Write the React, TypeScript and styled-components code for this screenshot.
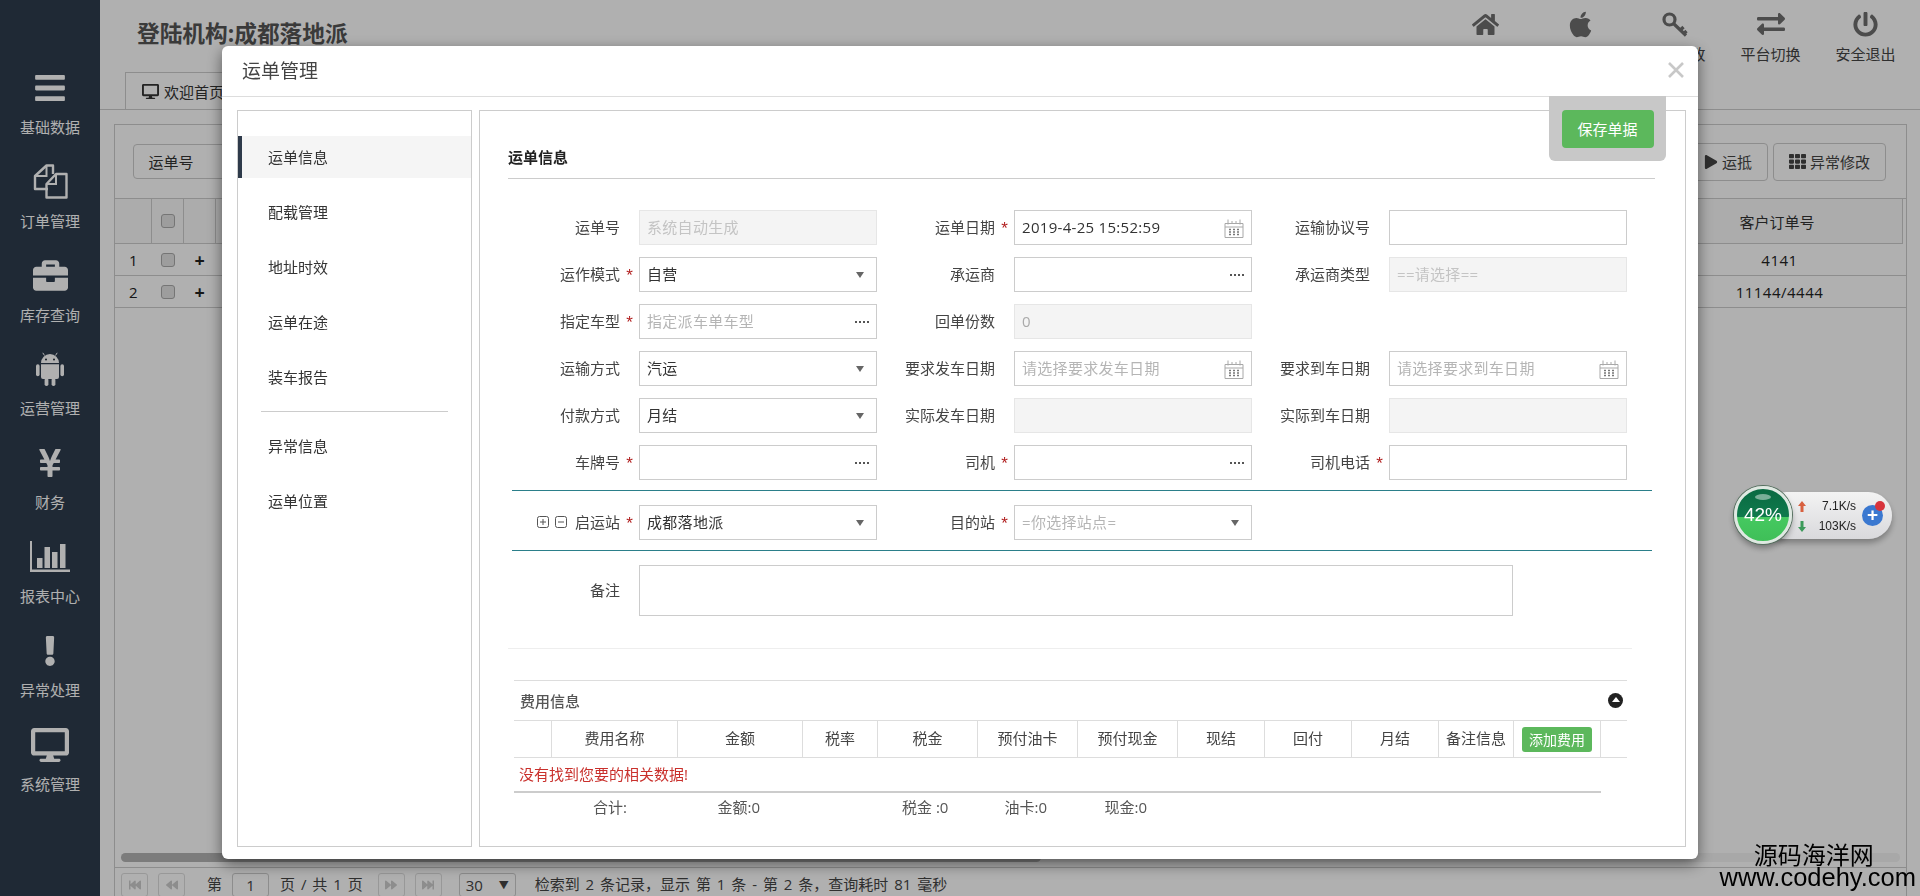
import styled, { createGlobalStyle } from 'styled-components';
import {
  FaApple,
  FaBackward,
  FaBars,
  FaBriefcase,
  FaDesktop,
  FaExchangeAlt,
  FaExclamation,
  FaFastBackward,
  FaFastForward,
  FaForward,
  FaHome,
  FaPlay,
  FaPowerOff,
  FaTh,
  FaYenSign,
} from 'react-icons/fa';

const FONT = '"Open Sans", "Noto Sans CJK SC", sans-serif';
const FEE_COLUMNS = '38px 126px 125px 75px 100px 100px 100px 87px 87px 87px 75px 87px 26px';

type Addon = 'date' | 'select' | 'more';

interface IField {
  label: string;
  required?: boolean;
  value?: string;
  placeholder?: string;
  disabled?: boolean;
  addon?: Addon;
}

const FORM_ROWS: (IField | null)[][] = [
  [
    { label: '运单号', placeholder: '系统自动生成', disabled: true },
    { label: '运单日期', required: true, value: '2019-4-25 15:52:59', addon: 'date' },
    { label: '运输协议号' },
  ],
  [
    { label: '运作模式', required: true, value: '自营', addon: 'select' },
    { label: '承运商', addon: 'more' },
    { label: '承运商类型', placeholder: '==请选择==', disabled: true },
  ],
  [
    { label: '指定车型', required: true, placeholder: '指定派车单车型', addon: 'more' },
    { label: '回单份数', value: '0', disabled: true },
    null,
  ],
  [
    { label: '运输方式', value: '汽运', addon: 'select' },
    { label: '要求发车日期', placeholder: '请选择要求发车日期', addon: 'date' },
    { label: '要求到车日期', placeholder: '请选择要求到车日期', addon: 'date' },
  ],
  [
    { label: '付款方式', value: '月结', addon: 'select' },
    { label: '实际发车日期', disabled: true },
    { label: '实际到车日期', disabled: true },
  ],
  [
    { label: '车牌号', required: true, addon: 'more' },
    { label: '司机', required: true, addon: 'more' },
    { label: '司机电话', required: true },
  ],
];

function FilesIcon() {
  return (
    <svg width="36" height="35" viewBox="0 0 36 35" fill="none" stroke="currentColor" strokeWidth="2.4">
      <path d="M21 10V1.5h-6.5L3 12v13h13" strokeLinejoin="round" />
      <path d="M14.5 1.5V12H3" strokeWidth="2" />
      <path d="M34.5 33.5h-20V20L24 10h10.5z" strokeLinejoin="round" />
      <path d="M24 10v10H14.5" strokeWidth="2" />
    </svg>
  );
}

function AndroidIcon() {
  return (
    <svg width="28" height="34" viewBox="0 0 28 34" fill="currentColor">
      <path d="M5 11a9 9 0 0 1 18 0z" />
      <path d="M8.5 3.5L6.8 0.8M19.5 3.5l1.7-2.7" stroke="currentColor" strokeWidth="1" />
      <circle cx="10" cy="7.5" r="1" fill="#1f2a36" />
      <circle cx="18" cy="7.5" r="1" fill="#1f2a36" />
      <path d="M5 12.2h18V25a2 2 0 0 1-2 2H7a2 2 0 0 1-2-2z" />
      <rect x="0" y="12.2" width="3.6" height="12" rx="1.8" />
      <rect x="24.4" y="12.2" width="3.6" height="12" rx="1.8" />
      <rect x="8.6" y="26" width="3.8" height="8" rx="1.8" />
      <rect x="15.6" y="26" width="3.8" height="8" rx="1.8" />
    </svg>
  );
}

function ChartIcon() {
  return (
    <svg width="40" height="31" viewBox="0 0 40 31" fill="currentColor">
      <path d="M0 0h2v28.5h38V31H0z" />
      <rect x="7" y="17" width="5.5" height="10" />
      <rect x="14.5" y="6" width="5.5" height="21" />
      <rect x="22" y="11" width="5.5" height="16" />
      <rect x="30" y="3" width="5.5" height="24" />
    </svg>
  );
}

function KeyIcon() {
  return (
    <svg width="27" height="25" viewBox="0 0 27 25" fill="none" stroke="currentColor" strokeWidth="3.2">
      <ellipse cx="7.5" cy="7.5" rx="5.5" ry="5.5" />
      <path d="M11.5 11.5L24 23.5M18.5 18l3-3M22 21.5l2.5-2.5" />
    </svg>
  );
}

const SIDE_ITEMS = [
  { label: '基础数据', icon: <FaBars size={34} /> },
  { label: '订单管理', icon: <FilesIcon /> },
  { label: '库存查询', icon: <FaBriefcase size={35} /> },
  { label: '运营管理', icon: <AndroidIcon /> },
  { label: '财务', icon: <FaYenSign size={32} /> },
  { label: '报表中心', icon: <ChartIcon /> },
  { label: '异常处理', icon: <FaExclamation size={30} /> },
  { label: '系统管理', icon: <FaDesktop size={38} /> },
];

const TOP_ITEMS = [
  { label: '首页', icon: <FaHome size={27} /> },
  { label: '苹果', icon: <FaApple size={29} /> },
  { label: '密码修改', icon: <KeyIcon /> },
  { label: '平台切换', icon: <FaExchangeAlt size={28} /> },
  { label: '安全退出', icon: <FaPowerOff size={25} /> },
];

const NAV_TOP = ['运单信息', '配载管理', '地址时效', '运单在途', '装车报告'];
const NAV_BOTTOM = ['异常信息', '运单位置'];
const FEE_HEADS = [
  '',
  '费用名称',
  '金额',
  '税率',
  '税金',
  '预付油卡',
  '预付现金',
  '现结',
  '回付',
  '月结',
  '备注信息',
];

function CalendarIcon() {
  return (
    <svg width="20" height="20" viewBox="0 0 20 20" fill="none" stroke="#a8a8a8">
      <path d="M1 5.5h18v14H1zM1 9h18" />
      <path d="M4 1.5v5M8 3v3M12 3v3M16 1.5v5" />
      <path
        d="M5 11.5h2M9 11.5h2M13 11.5h2M5 14h2M9 14h2M13 14h2M5 16.5h2M9 16.5h2M13 16.5h2"
        stroke="#777"
        strokeWidth="1.5"
      />
    </svg>
  );
}

function MoreIcon() {
  return (
    <svg width="14" height="2" viewBox="0 0 14 2" fill="#555">
      <rect x="0" width="2" height="2" />
      <rect x="4" width="2" height="2" />
      <rect x="8" width="2" height="2" />
      <rect x="12" width="2" height="2" />
    </svg>
  );
}

function TreeIcon({ plus }: { plus?: boolean }) {
  return (
    <svg width="12" height="12" viewBox="0 0 12 12" fill="none" stroke="#555">
      <rect x="0.5" y="0.5" width="11" height="11" rx="2" />
      <path d={plus ? 'M3 6h6M6 3v6' : 'M3 6h6'} />
    </svg>
  );
}

function FormField({ label, required, value, placeholder, disabled, addon }: IField) {
  return (
    <Field>
      <FieldLabel>{label}</FieldLabel>
      <Star>{required ? '*' : ''}</Star>
      <InputBox $disabled={disabled}>
        <TextInput readOnly disabled={disabled} value={value ?? ''} placeholder={placeholder} />
        {addon === 'date' && <CalendarIcon />}
        {addon === 'more' && <MoreIcon />}
        {addon === 'select' && <Caret />}
      </InputBox>
    </Field>
  );
}

export default function App() {
  return (
    <>
      <GlobalStyle />
      <Shell>
        <Sidebar>
          {SIDE_ITEMS.map(({ label, icon }) => (
            <SideItem key={label}>
              <SideIcon>{icon}</SideIcon>
              <SideLabel>{label}</SideLabel>
            </SideItem>
          ))}
        </Sidebar>
        <Main>
          <Header>
            <HeaderTop>
              <OrgTitle>登陆机构:成都落地派</OrgTitle>
              <TopNav>
                {TOP_ITEMS.map(({ label, icon }) => (
                  <TopItem key={label}>
                    <TopIcon>{icon}</TopIcon>
                    <span>{label}</span>
                  </TopItem>
                ))}
              </TopNav>
            </HeaderTop>
            <TabRow>
              <Tab>
                <FaDesktop size={17} />
                欢迎首页
              </Tab>
            </TabRow>
          </Header>
          <ListPanel>
            <Toolbar>
              <SearchLabel>运单号</SearchLabel>
              <ToolButtons>
                <ToolButton>
                  <FaPlay size={14} />
                  运抵
                </ToolButton>
                <ToolButton>
                  <FaTh size={17} />
                  异常修改
                </ToolButton>
              </ToolButtons>
            </Toolbar>
            <ListHead>
              <ListCell />
              <ListCell>
                <CheckMark />
              </ListCell>
              <ListCell />
              <ListCell />
              <ListCell>客户订单号</ListCell>
            </ListHead>
            {[
              ['1', '4141'],
              ['2', '11144/4444'],
            ].map(([no, order]) => (
              <ListRow key={no}>
                <RowCell>{no}</RowCell>
                <RowCell>
                  <CheckMark />
                </RowCell>
                <RowCell>
                  <strong>+</strong>
                </RowCell>
                <RowCell />
                <RowCell>{order}</RowCell>
              </ListRow>
            ))}
            <ListSpacer />
            <ScrollTrack>
              <ScrollThumb />
            </ScrollTrack>
            <Pager>
              <PagerBtn>
                <FaFastBackward size={12} />
              </PagerBtn>
              <PagerBtn>
                <FaBackward size={12} />
              </PagerBtn>
              <PagerText $left={12}>第</PagerText>
              <PagerInput>1</PagerInput>
              <PagerText $left={11}>页 / 共 1 页</PagerText>
              <PagerBtn $left={15}>
                <FaForward size={12} />
              </PagerBtn>
              <PagerBtn>
                <FaFastForward size={12} />
              </PagerBtn>
              <PagerSelect>
                30 <small>▼</small>
              </PagerSelect>
              <PagerText $left={19}>检索到 2 条记录，显示 第 1 条 - 第 2 条，查询耗时 81 毫秒</PagerText>
            </Pager>
          </ListPanel>
        </Main>
      </Shell>

      <Backdrop />

      <Modal>
        <ModalHeader>
          <ModalTitle>运单管理</ModalTitle>
          <svg width="16" height="16" viewBox="0 0 16 16" stroke="#c8c8c8" strokeWidth="2.6">
            <path d="M1 1l14 14M15 1L1 15" />
          </svg>
        </ModalHeader>
        <ModalBody>
          <SideNav>
            {NAV_TOP.map((name, i) => (
              <NavItem key={name} $active={i === 0}>
                {name}
              </NavItem>
            ))}
            <NavDivider />
            {NAV_BOTTOM.map((name) => (
              <NavItem key={name}>{name}</NavItem>
            ))}
          </SideNav>
          <ContentPanel>
            <SectionTitle>运单信息</SectionTitle>
            <FormGrid>
              {FORM_ROWS.flat().map((field, i) =>
                field ? <FormField key={field.label} {...field} /> : <div key={i} />,
              )}
            </FormGrid>
            <StationRow>
              <Field>
                <FieldLabel>
                  <TreeIcon plus />
                  <TreeIcon />
                  <StationName>启运站</StationName>
                </FieldLabel>
                <Star>*</Star>
                <InputBox>
                  <TextInput readOnly value="成都落地派" />
                  <Caret />
                </InputBox>
              </Field>
              <Field>
                <FieldLabel>目的站</FieldLabel>
                <Star>*</Star>
                <InputBox>
                  <TextInput readOnly value="" placeholder="=你选择站点=" />
                  <Caret />
                </InputBox>
              </Field>
            </StationRow>
            <RemarkRow>
              <FieldLabel>备注</FieldLabel>
              <Star />
              <RemarkBox readOnly />
            </RemarkRow>
            <FaintLine />
            <FeeBlock>
              <FeeTitleRow>
                <FeeTitle>费用信息</FeeTitle>
                <CollapseDot />
              </FeeTitleRow>
              <FeeHead>
                {FEE_HEADS.map((name, i) => (
                  <FeeCell key={i}>{name}</FeeCell>
                ))}
                <FeeActionCell>
                  <AddFeeButton>添加费用</AddFeeButton>
                </FeeActionCell>
                <span />
              </FeeHead>
              <EmptyRow>没有找到您要的相关数据!</EmptyRow>
              <ThickLine />
              <Totals>
                <span>合计:</span>
                <span>金额:0</span>
                <span>税金 :0</span>
                <span>油卡:0</span>
                <span>现金:0</span>
              </Totals>
            </FeeBlock>
          </ContentPanel>
        </ModalBody>
        <SaveTray>
          <SaveButton>保存单据</SaveButton>
        </SaveTray>
      </Modal>

      <SpeedWidget>
        <Globe>
          <GlobeShine />
          42%
        </Globe>
        <SpeedPill>
          <SpeedList>
            <SpeedLine>
              <svg width="8" height="11" viewBox="0 0 8 11" fill="#d8603f">
                <path d="M4 0l4 5H5.5v6h-3V5H0z" />
              </svg>
              <span>7.1K/s</span>
            </SpeedLine>
            <SpeedLine>
              <svg width="8" height="11" viewBox="0 0 8 11" fill="#3c9a5a">
                <path d="M4 11L0 6h2.5V0h3v6H8z" />
              </svg>
              <span>103K/s</span>
            </SpeedLine>
          </SpeedList>
          <PlusBall>
            +
            <RedDot />
          </PlusBall>
        </SpeedPill>
      </SpeedWidget>

      <Watermark>
        <WatermarkCn>源码海洋网</WatermarkCn>
        <WatermarkEn>www.codehy.com</WatermarkEn>
      </Watermark>
    </>
  );
}

const GlobalStyle = createGlobalStyle`
  * {
    box-sizing: border-box;
  }
  html,
  body {
    margin: 0;
    height: 100%;
    overflow: hidden;
    background: #fff;
  }
  body {
    font-family: ${FONT};
    font-size: 15px;
    color: #333;
  }
`;

const Shell = styled.div`
  display: flex;
  width: 1920px;
  height: 896px;
`;

const Sidebar = styled.nav`
  flex: 0 0 100px;
  display: flex;
  flex-direction: column;
  gap: 23.8px;
  padding-top: 68px;
  background: #2d3c4e;
`;
const SideItem = styled.div`
  display: flex;
  flex-direction: column;
  align-items: center;
  gap: 9px;
  color: #fff;
`;
const SideIcon = styled.div`
  display: flex;
  align-items: center;
  justify-content: center;
  height: 40px;
`;
const SideLabel = styled.span`
  margin-bottom: 1px;
  line-height: 20px;
`;

const Main = styled.div`
  flex: 1;
  display: flex;
  flex-direction: column;
  min-width: 0;
`;
const Header = styled.header`
  height: 110px;
  border-bottom: 1px solid #ccc;
`;
const HeaderTop = styled.div`
  display: flex;
  justify-content: space-between;
  height: 72px;
  padding-right: 7px;
`;
const OrgTitle = styled.h1`
  margin: 0;
  padding-left: 37px;
  font-size: 22.7px;
  font-weight: 700;
  line-height: 68px;
  color: #555;
`;
const TopNav = styled.div`
  display: flex;
  padding-top: 10px;
`;
const TopItem = styled.div`
  display: flex;
  flex-direction: column;
  align-items: center;
  width: 95px;
  gap: 6px;
  line-height: 20px;
  color: #444;
`;
const TopIcon = styled.div`
  display: flex;
  align-items: center;
  justify-content: center;
  height: 28px;
  color: #6e6e6e;
`;
const TabRow = styled.div`
  display: flex;
  height: 38px;
  padding-left: 25px;
`;
const Tab = styled.div`
  display: flex;
  align-items: center;
  gap: 5px;
  width: 140px;
  padding-left: 16px;
  border: 1px solid #ccc;
  border-bottom: 0;
`;

const ListPanel = styled.section`
  flex: 1;
  display: flex;
  flex-direction: column;
  min-height: 0;
  margin: 14px 13px 0 14px;
  border: 1px solid #ccc;
  border-bottom: 0;
`;
const Toolbar = styled.div`
  display: flex;
  align-items: center;
  justify-content: space-between;
  height: 74px;
  padding: 0 20px 0 18px;
  border-bottom: 1px solid #ccc;
`;
const SearchLabel = styled.div`
  display: flex;
  align-items: center;
  justify-content: center;
  width: 110px;
  height: 35px;
  padding-right: 34px;
  border: 1px solid #ccc;
  border-radius: 4px;
`;
const ToolButtons = styled.div`
  display: flex;
  gap: 5px;
`;
const ToolButton = styled.div`
  display: flex;
  align-items: center;
  justify-content: center;
  gap: 4px;
  height: 38px;
  padding: 0 15px;
  border: 1px solid #ccc;
  border-radius: 4px;
  color: #444;
`;
const ListHead = styled.div`
  display: grid;
  grid-template-columns: 37px 32px 32px 1fr 250px;
  height: 45px;
  margin-right: 3px;
  border-bottom: 1px solid #ccc;
  border-right: 1px solid #ccc;
  background: #fafafa;
`;
const ListCell = styled.div`
  display: flex;
  align-items: center;
  justify-content: center;
  border-right: 1px solid #ccc;
  &:last-child {
    border-right: 0;
  }
`;
const ListRow = styled.div`
  display: grid;
  grid-template-columns: 37px 32px 32px 1fr 253px;
  height: 32px;
  border-bottom: 1px solid #ccc;
`;
const RowCell = styled.div`
  display: flex;
  align-items: center;
  justify-content: center;
  letter-spacing: 0.5px;
  color: #222;
  strong {
    font-size: 18px;
  }
`;
const CheckMark = styled.span`
  width: 14px;
  height: 14px;
  border: 1px solid #aaa;
  border-radius: 3px;
  background: #e4e4e4;
`;
const ListSpacer = styled.div`
  flex: 1;
`;
const ScrollTrack = styled.div`
  height: 9px;
  margin: 0 6px 5px;
  border-radius: 5px;
  background: #f3f3f3;
`;
const ScrollThumb = styled.div`
  width: 920px;
  height: 9px;
  border-radius: 5px;
  background: #b4b4b4;
`;
const Pager = styled.div`
  display: flex;
  align-items: flex-start;
  height: 29px;
  padding: 5px 0 0 6px;
  border-top: 1px solid #ccc;
  color: #444;
  line-height: 23px;
`;
const PagerBtn = styled.div<{ $left?: number }>`
  display: flex;
  align-items: center;
  justify-content: center;
  width: 27px;
  height: 24px;
  margin-left: ${({ $left }) => $left ?? 0}px;
  margin-right: 10px;
  border: 1px solid #ddd;
  border-radius: 3px;
  color: #ccc;
`;
const PagerText = styled.span<{ $left: number }>`
  margin-left: ${({ $left }) => $left}px;
  white-space: nowrap;
  word-spacing: 2px;
`;
const PagerInput = styled.div`
  width: 37px;
  height: 24px;
  margin-left: 10px;
  border: 1px solid #ccc;
  border-radius: 3px;
  text-align: center;
`;
const PagerSelect = styled.div`
  display: flex;
  justify-content: space-between;
  width: 57px;
  height: 24px;
  margin-left: 7px;
  padding: 0 6px;
  border: 1px solid #ccc;
  border-radius: 3px;
  small {
    font-size: 10px;
  }
`;

const Backdrop = styled.div`
  position: fixed;
  inset: 0;
  background: rgba(0, 0, 0, 0.31);
`;

const Modal = styled.div`
  position: fixed;
  left: 222px;
  top: 46px;
  width: 1476px;
  height: 813px;
  display: flex;
  flex-direction: column;
  border-radius: 6px;
  background: #fff;
  box-shadow: 0 5px 15px rgba(0, 0, 0, 0.5);
`;
const ModalHeader = styled.div`
  display: flex;
  align-items: center;
  justify-content: space-between;
  flex: 0 0 51px;
  padding: 0 14px 2px 20px;
  border-bottom: 1px solid #ddd;
`;
const ModalTitle = styled.h2`
  margin: 0;
  font-size: 19px;
  font-weight: 400;
  color: #444;
`;
const ModalBody = styled.div`
  flex: 1;
  display: grid;
  grid-template-columns: 235px 1207px;
  gap: 7px;
  padding: 13px 0 12px 15px;
  min-height: 0;
`;
const SideNav = styled.div`
  padding-top: 25px;
  border: 1px solid #ccc;
`;
const NavItem = styled.div<{ $active?: boolean }>`
  display: flex;
  align-items: center;
  height: 42px;
  margin-bottom: 13px;
  padding: 0 0 2px 26px;
  border-left: 4px solid ${({ $active }) => ($active ? '#2e3a4a' : 'transparent')};
  background: ${({ $active }) => ($active ? '#f5f5f5' : 'transparent')};
  color: #333;
`;
const NavDivider = styled.div`
  height: 1px;
  margin: 0 23px 13px 23px;
  background: #ccc;
`;
const ContentPanel = styled.div`
  padding-left: 28px;
  border: 1px solid #ccc;
`;
const SectionTitle = styled.div`
  height: 68px;
  margin-right: 30px;
  padding-top: 35px;
  border-bottom: 1px solid #ccc;
  font-weight: 700;
  line-height: 22px;
  color: #222;
`;
const FormGrid = styled.div`
  display: grid;
  grid-template-columns: repeat(3, 375px);
  grid-auto-rows: 35px;
  row-gap: 12px;
  margin-top: 31px;
`;
const Field = styled.div`
  display: flex;
  align-items: center;
`;
const FieldLabel = styled.label`
  flex: 0 0 112px;
  display: flex;
  align-items: center;
  justify-content: flex-end;
  gap: 6px;
  padding-bottom: 2px;
  white-space: nowrap;
  color: #444;
`;
const Star = styled.span`
  flex: 0 0 19px;
  padding-top: 3px;
  font-family: 'Liberation Sans', sans-serif;
  font-size: 17px;
  text-align: center;
  color: #b22222;
`;
const InputBox = styled.div<{ $disabled?: boolean }>`
  flex: 0 0 238px;
  display: flex;
  align-items: center;
  height: 35px;
  padding-right: 7px;
  border: 1px solid ${({ $disabled }) => ($disabled ? '#e6e6e6' : '#ccc')};
  background: ${({ $disabled }) => ($disabled ? '#f4f4f4' : '#fff')};
`;
const TextInput = styled.input`
  flex: 1;
  min-width: 0;
  height: 100%;
  padding: 0 0 2px 7px;
  border: 0;
  outline: 0;
  background: transparent;
  font: inherit;
  letter-spacing: 0.3px;
  color: #333;
  &::placeholder {
    color: #b5b5b5;
    opacity: 1;
  }
  &:disabled {
    color: #aaa;
  }
  &:disabled::placeholder {
    color: #c4c4c4;
  }
`;
const Caret = styled.span`
  width: 0;
  height: 0;
  margin-right: 5px;
  border-left: 4.5px solid transparent;
  border-right: 4.5px solid transparent;
  border-top: 6px solid #666;
`;
const StationRow = styled.div`
  display: grid;
  grid-template-columns: repeat(3, 375px);
  width: 1140px;
  margin: 10px 0 0 4px;
  padding: 14px 0 10px;
  border-top: 1px solid #2b7f8a;
  border-bottom: 1px solid #2b7f8a;
  & > div:first-child {
    margin-left: -4px;
  }
  & > div:nth-child(2) {
    margin-left: -4px;
  }
`;
const StationName = styled.span`
  margin-left: 2px;
`;
const RemarkRow = styled.div`
  display: flex;
  align-items: center;
  margin-top: 14px;
`;
const RemarkBox = styled.textarea`
  flex: 0 0 874px;
  height: 51px;
  padding: 6px 7px;
  border: 1px solid #ccc;
  outline: 0;
  resize: none;
  font: inherit;
`;
const FaintLine = styled.div`
  width: 1124px;
  height: 1px;
  margin-top: 32px;
  background: #eee;
`;
const FeeBlock = styled.div`
  width: 1113px;
  margin: 31px 0 0 6px;
`;
const FeeTitleRow = styled.div`
  display: flex;
  align-items: center;
  justify-content: space-between;
  height: 41px;
  padding: 0 4px 0 6px;
  border-top: 1px solid #ddd;
  border-bottom: 1px solid #ddd;
`;
const FeeTitle = styled.span`
  font-weight: 500;
  color: #555;
`;
const CollapseDot = styled.span`
  display: flex;
  align-items: center;
  justify-content: center;
  width: 15px;
  height: 15px;
  border-radius: 50%;
  background: #222;
  &::before {
    content: '';
    margin-top: -2px;
    border-left: 4px solid transparent;
    border-right: 4px solid transparent;
    border-bottom: 5px solid #fff;
  }
`;
const FeeHead = styled.div`
  display: grid;
  grid-template-columns: ${FEE_COLUMNS};
  height: 37px;
  border-bottom: 1px solid #ddd;
`;
const FeeCell = styled.div`
  display: flex;
  align-items: center;
  justify-content: center;
  padding-bottom: 3px;
  border-right: 1px solid #ddd;
  color: #444;
`;
const FeeActionCell = styled(FeeCell)`
  padding-bottom: 0;
`;
const AddFeeButton = styled.span`
  display: flex;
  align-items: center;
  justify-content: center;
  width: 70px;
  height: 25px;
  padding-bottom: 1px;
  border-radius: 3px;
  background: #5cb85c;
  font-size: 14px;
  color: #fff;
`;
const EmptyRow = styled.div`
  height: 33px;
  padding-left: 5px;
  line-height: 32px;
  color: #c9302c;
`;
const ThickLine = styled.div`
  width: 1087px;
  height: 2px;
  background: #ccc;
`;
const Totals = styled.div`
  display: grid;
  grid-template-columns: 124.5px 184.5px 102.5px 100px 1fr;
  height: 32px;
  padding-left: 79px;
  line-height: 28px;
  color: #555;
`;
const SaveTray = styled.div`
  position: absolute;
  right: 32px;
  top: 50px;
  display: flex;
  justify-content: center;
  width: 117px;
  height: 65px;
  padding-top: 14px;
  border-radius: 0 0 6px 6px;
  background: #c8c8c8;
`;
const SaveButton = styled.button`
  width: 92px;
  height: 38px;
  padding: 0 0 2px;
  border: 0;
  border-radius: 4px;
  background: #5cb85c;
  font: inherit;
  color: #fff;
`;

const SpeedWidget = styled.div`
  position: fixed;
  left: 1734px;
  top: 486px;
  display: flex;
  align-items: center;
`;
const Globe = styled.div`
  position: relative;
  z-index: 1;
  display: flex;
  align-items: center;
  justify-content: center;
  width: 58px;
  height: 58px;
  border: 3px solid #dfe9e2;
  border-radius: 50%;
  background: linear-gradient(#0a6a42 0%, #0f7a4c 54%, #45c960 54%, #3fbf58 100%);
  box-shadow: 0 0 0 1px #55705f, 0 4px 6px rgba(0, 0, 0, 0.35);
  font-family: 'Liberation Sans', sans-serif;
  font-size: 19px;
  color: #fff;
`;
const GlobeShine = styled.span`
  position: absolute;
  top: 5px;
  left: 18px;
  width: 16px;
  height: 6px;
  border-radius: 50%;
  background: rgba(255, 255, 255, 0.45);
`;
const SpeedPill = styled.div`
  display: flex;
  align-items: center;
  justify-content: space-between;
  width: 129px;
  height: 47px;
  margin-left: -29px;
  padding: 0 9px 0 35px;
  border-radius: 24px;
  background: linear-gradient(#f3f3f3, #d9d9dc);
  box-shadow: 0 4px 6px rgba(0, 0, 0, 0.3);
`;
const SpeedList = styled.div`
  display: flex;
  flex-direction: column;
  gap: 3px;
  width: 58px;
  padding-top: 2px;
`;
const SpeedLine = styled.div`
  display: flex;
  align-items: center;
  justify-content: space-between;
  font-family: 'Liberation Sans', sans-serif;
  font-size: 12px;
  line-height: 17px;
  color: #222;
`;
const PlusBall = styled.div`
  position: relative;
  display: flex;
  align-items: center;
  justify-content: center;
  width: 21px;
  height: 21px;
  border-radius: 50%;
  background: #3a78d0;
  font-family: 'Liberation Sans', sans-serif;
  font-size: 19px;
  font-weight: 700;
  color: #fff;
`;
const RedDot = styled.span`
  position: absolute;
  top: -4px;
  right: -2px;
  width: 10px;
  height: 10px;
  border-radius: 50%;
  background: #d8343c;
`;

const Watermark = styled.div`
  position: fixed;
  right: 4px;
  top: 842px;
  display: flex;
  flex-direction: column;
  align-items: center;
  color: #000;
`;
const WatermarkCn = styled.span`
  margin-left: -8px;
  font-size: 24px;
  line-height: 26px;
`;
const WatermarkEn = styled.span`
  font-family: 'Liberation Sans', sans-serif;
  font-size: 25.5px;
  line-height: 18px;
`;
